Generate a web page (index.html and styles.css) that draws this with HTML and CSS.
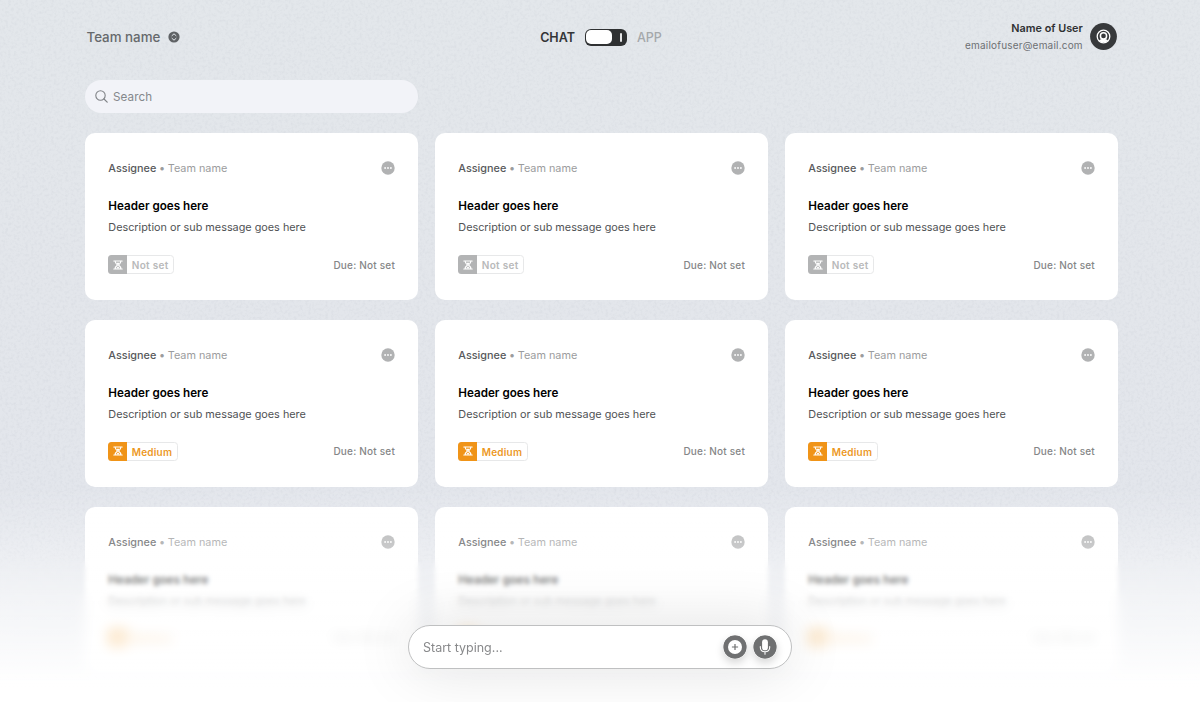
FILE: index.html
```html
<!DOCTYPE html>
<html lang="en">
<head>
  <meta charset="UTF-8">
  <title>Tasks</title>
  <link rel="stylesheet" href="styles.css">
</head>
<body>
  <svg class="grain">
    <filter id="noise" color-interpolation-filters="sRGB">
      <feTurbulence type="fractalNoise" baseFrequency="0.35" numOctaves="3" seed="4"/>
      <feColorMatrix values="0 0 0 0 0.35  0 0 0 0 0.38  0 0 0 0 0.46  1.6 0 0 0 -0.68"/>
    </filter>
    <rect width="100%" height="100%" filter="url(#noise)"/>
  </svg>
  <svg class="defs">
    <symbol id="more" viewBox="0 0 14 14">
      <circle cx="7" cy="7" r="6.7" fill="#b1b2b3"/>
      <circle cx="4.1" cy="7" r=".9" fill="#fff"/><circle cx="7" cy="7" r=".9" fill="#fff"/><circle cx="9.9" cy="7" r=".9" fill="#fff"/>
    </symbol>
    <symbol id="hourglass" viewBox="0 0 10 10">
      <path d="M.8 1h8.400M.8 9h8.400M2.100 1c0 2 1 3 2.400 4-1.400 1-2.400 2-2.400 4M7.900 1c0 2-1 3-2.400 4 1.400 1 2.400 2 2.400 4" fill="none" stroke="#fff" stroke-width="1.100" stroke-linecap="round"/>
      <path d="M3.200 2.800h3.600L5 4.900zM5 6.300 6.800 8.500H3.200z" fill="#fff"/>
    </symbol>
  </svg>

  <div class="page">
    <header class="topbar">
      <div class="team">
        <span>Team name</span>
        <svg width="12" height="12" viewBox="0 0 12 12"><circle cx="6" cy="6" r="5.600" fill="#5f6265"/><path d="M3.700 4.900 6 2.800l2.300 2.100M3.700 7.100 6 9.200l2.300-2.100" fill="none" stroke="#e2e6eb" stroke-width="1"/></svg>
      </div>
      <div class="mode">
        <span>CHAT</span>
        <div class="switch"><i class="knob"></i><i class="tick"></i></div>
        <span class="off">APP</span>
      </div>
      <div class="user">
        <div class="user-text">
          <div class="user-name">Name of User</div>
          <div class="user-email">emailofuser@email.com</div>
        </div>
        <svg width="27" height="27" viewBox="0 0 27 27"><circle cx="13.500" cy="13.500" r="13.400" fill="#37393b"/><circle cx="13.500" cy="13.500" r="6.300" fill="none" stroke="#fff" stroke-width="1.300"/><circle cx="13.500" cy="12.900" r="3.100" fill="none" stroke="#fff" stroke-width="1.500"/><path d="M9 17.400c1-1.100 2.700-1.300 4.500-1.300s3.500.2 4.500 1.300a6.200 6.200 0 0 1-9 0z" fill="#fff"/></svg>
      </div>
    </header>

    <div class="search">
      <svg width="13" height="13" viewBox="0 0 13 13"><circle cx="5.500" cy="5.500" r="4.700" fill="none" stroke="#808387" stroke-width="1.100"/><path d="M9 9l3.200 3.200" stroke="#808387" stroke-width="1.200" stroke-linecap="round"/></svg>
      <span>Search</span>
    </div>

    <main class="cards">
      <div class="card">
        <div class="card-top"><p><b>Assignee</b><i>•</i>Team name</p><svg class="more"><use href="#more"/></svg></div>
        <h2>Header goes here</h2>
        <p class="desc">Description or sub message goes here</p>
        <div class="card-foot"><div class="tag"><span class="tag-icon"><svg><use href="#hourglass"/></svg></span><span class="tag-text">Not set</span></div><span class="due">Due: Not set</span></div>
      </div>
      <div class="card">
        <div class="card-top"><p><b>Assignee</b><i>•</i>Team name</p><svg class="more"><use href="#more"/></svg></div>
        <h2>Header goes here</h2>
        <p class="desc">Description or sub message goes here</p>
        <div class="card-foot"><div class="tag"><span class="tag-icon"><svg><use href="#hourglass"/></svg></span><span class="tag-text">Not set</span></div><span class="due">Due: Not set</span></div>
      </div>
      <div class="card">
        <div class="card-top"><p><b>Assignee</b><i>•</i>Team name</p><svg class="more"><use href="#more"/></svg></div>
        <h2>Header goes here</h2>
        <p class="desc">Description or sub message goes here</p>
        <div class="card-foot"><div class="tag"><span class="tag-icon"><svg><use href="#hourglass"/></svg></span><span class="tag-text">Not set</span></div><span class="due">Due: Not set</span></div>
      </div>
      <div class="card">
        <div class="card-top"><p><b>Assignee</b><i>•</i>Team name</p><svg class="more"><use href="#more"/></svg></div>
        <h2>Header goes here</h2>
        <p class="desc">Description or sub message goes here</p>
        <div class="card-foot"><div class="tag medium"><span class="tag-icon"><svg><use href="#hourglass"/></svg></span><span class="tag-text">Medium</span></div><span class="due">Due: Not set</span></div>
      </div>
      <div class="card">
        <div class="card-top"><p><b>Assignee</b><i>•</i>Team name</p><svg class="more"><use href="#more"/></svg></div>
        <h2>Header goes here</h2>
        <p class="desc">Description or sub message goes here</p>
        <div class="card-foot"><div class="tag medium"><span class="tag-icon"><svg><use href="#hourglass"/></svg></span><span class="tag-text">Medium</span></div><span class="due">Due: Not set</span></div>
      </div>
      <div class="card">
        <div class="card-top"><p><b>Assignee</b><i>•</i>Team name</p><svg class="more"><use href="#more"/></svg></div>
        <h2>Header goes here</h2>
        <p class="desc">Description or sub message goes here</p>
        <div class="card-foot"><div class="tag medium"><span class="tag-icon"><svg><use href="#hourglass"/></svg></span><span class="tag-text">Medium</span></div><span class="due">Due: Not set</span></div>
      </div>
      <div class="card">
        <div class="card-top"><p><b>Assignee</b><i>•</i>Team name</p><svg class="more"><use href="#more"/></svg></div>
        <h2>Header goes here</h2>
        <p class="desc">Description or sub message goes here</p>
        <div class="card-foot"><div class="tag medium"><span class="tag-icon"><svg><use href="#hourglass"/></svg></span><span class="tag-text">Medium</span></div><span class="due">Due: Not set</span></div>
      </div>
      <div class="card">
        <div class="card-top"><p><b>Assignee</b><i>•</i>Team name</p><svg class="more"><use href="#more"/></svg></div>
        <h2>Header goes here</h2>
        <p class="desc">Description or sub message goes here</p>
        <div class="card-foot"><div class="tag medium"><span class="tag-icon"><svg><use href="#hourglass"/></svg></span><span class="tag-text">Medium</span></div><span class="due">Due: Not set</span></div>
      </div>
      <div class="card">
        <div class="card-top"><p><b>Assignee</b><i>•</i>Team name</p><svg class="more"><use href="#more"/></svg></div>
        <h2>Header goes here</h2>
        <p class="desc">Description or sub message goes here</p>
        <div class="card-foot"><div class="tag medium"><span class="tag-icon"><svg><use href="#hourglass"/></svg></span><span class="tag-text">Medium</span></div><span class="due">Due: Not set</span></div>
      </div>
    </main>
  </div>

  <!-- stacked blurs get stronger towards the bottom -->
  <div class="blur blur-1"></div>
  <div class="blur blur-2"></div>
  <div class="fade"></div>

  <div class="composer">
    <span>Start typing...</span>
    <svg class="round" viewBox="0 0 24 24"><circle cx="12" cy="12" r="11.700" fill="#6f7071"/><circle cx="12" cy="12" r="7" fill="#fff"/><path d="M12 8.900v6.200M8.900 12h6.200" stroke="#6f7071" stroke-width="1.200"/></svg>
    <svg class="round" viewBox="0 0 24 24"><circle cx="12" cy="12" r="11.700" fill="#6f7071"/><rect x="9.100" y="4.300" width="5.800" height="11" rx="2.900" fill="#fff"/><path d="M7.300 11.500v.8c0 2.800 2 4.500 4.700 4.500s4.700-1.700 4.700-4.500v-.8M12 16.800v2.500" fill="none" stroke="#fff" stroke-width="1.100" stroke-linecap="round"/></svg>
  </div>
</body>
</html>
```
FILE: styles.css
```css
* { box-sizing: border-box; }
html, body { height: 100%; margin: 0; overflow: hidden; }
body { font-family: Inter, sans-serif; background: linear-gradient(#e3e7eb 0, #e3e6eb 40%, #e3e6ec 72%); position: relative; }
p, h2 { margin: 0; }
b, i { font-style: normal; }
.defs { position: absolute; width: 0; height: 0; }
.grain { position: absolute; inset: 0; width: 100%; height: 100%; opacity: 0.07; }

.page { position: relative; width: 1033.33px; margin-left: 85px; }
.topbar { display: grid; grid-template-columns: 1fr auto 1fr; align-items: center; height: 80px; padding: 0 1.5px 7px; }
.team { display: flex; align-items: center; gap: 8px; font-size: 13.33px; font-weight: 500; color: #66696c; }
.mode { display: flex; align-items: center; gap: 10px; font-size: 12.5px; font-weight: 600; color: #333537; position: relative; left: -0.7px; top: 0.5px; }
.mode .off { font-weight: 500; color: #a5a8ab; }
.switch { display: flex; align-items: center; justify-content: space-between; width: 42px; height: 17px; padding: 1px 5px 1px 1.5px; border-radius: 6px; background: #2f3132; }
.knob { width: 26px; height: 14px; border-radius: 5px; background: #fff; }
.tick { width: 2px; height: 9px; border-radius: 1px; background: #e4e5e6; }
.user { display: flex; align-items: center; justify-content: flex-end; gap: 7px; }
.user-text { text-align: right; padding-top: 1px; }
.user-name { font-size: 10.83px; line-height: 17px; font-weight: 600; color: #2f3133; }
.user-email { font-size: 10px; line-height: 17px; color: #6d7073; letter-spacing: 0.2px; }

.search { display: flex; align-items: center; gap: 5px; width: 333.33px; height: 33.33px; padding-left: 10px; border-radius: 17px; background: #f2f3f8; font-size: 11.67px; letter-spacing: 0.1px; color: #85888c; }

.cards { display: grid; grid-template-columns: repeat(3, 1fr); gap: 20px 16.67px; margin-top: 20px; }
.card { height: 166.67px; padding: 25.5px 23.33px 0; border-radius: 10px; background: #fff; }
.card-top { display: flex; align-items: center; justify-content: space-between; height: 19px; font-size: 10.83px; color: #9b9c9d; }
.card-top p { padding-top: 1px; }
.card-top b { font-weight: 500; color: #57595b; }
.card-top i { margin: 0 2.7px; }
.more { width: 14px; height: 14px; }
.card h2 { margin-top: 19.5px; font-size: 11.67px; line-height: 19px; font-weight: 600; color: #000; }
.desc { margin-top: 2px; font-size: 10.83px; line-height: 19px; color: #505254; }
.card-foot { display: flex; align-items: center; justify-content: space-between; margin-top: 18px; height: 19px; }
.tag { display: flex; height: 19px; border: 1px solid #e7e8e9; border-radius: 3.5px; font-size: 10px; font-weight: 600; color: #b8b9ba; }
.tag-icon { display: flex; align-items: center; justify-content: center; width: 19px; height: 19px; margin: -1px 0 0 -1px; border-radius: 3.5px 0 0 3.5px; background: #b3b4b5; }
.tag-icon svg { width: 10px; height: 10px; }
.tag-text { padding: 0 4.5px; line-height: 18px; letter-spacing: 0.28px; }
.medium .tag-text { color: #ec981f; letter-spacing: 0.2px; }
.medium .tag-icon { background: #f09418; }
.due { font-size: 10px; font-weight: 500; color: #858687; letter-spacing: 0.2px; }

.blur, .fade { position: absolute; left: 0; right: 0; bottom: 0; }
.blur-1 { top: 558px; backdrop-filter: blur(2px); mask-image: linear-gradient(transparent, #000 12px); }
.blur-2 { top: 586px; backdrop-filter: blur(6px); mask-image: linear-gradient(transparent, rgba(0,0,0,0.7) 16px, #000 35px); }
.fade { top: 485px; background: linear-gradient(rgba(255,255,255,0) 0, rgba(255,255,255,0.26) 25%, rgba(255,255,255,0.57) 50%, rgba(255,255,255,0.77) 72%, #fff 93%); }

.composer { position: absolute; left: 408px; top: 625px; display: flex; align-items: center; gap: 6px; width: 384px; height: 44px; padding: 0 15px 0 14px; border: 1px solid #bfc0c1; border-radius: 22px; background: #fff; font-size: 12.5px; color: #88898b; box-shadow: 0 0 60px rgba(0,0,0,0.13); }
.composer span { flex: 1; }
.round { width: 24px; height: 24px; border-radius: 50%; box-shadow: 0 4px 9px rgba(0,0,0,0.16); }
.round:last-child { margin-right: -1px; }
```
